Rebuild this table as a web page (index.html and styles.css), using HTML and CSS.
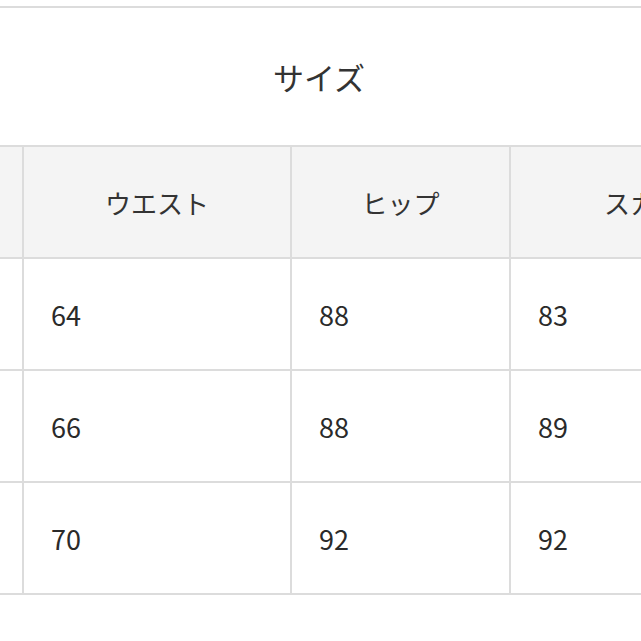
FILE: index.html
```html
<!DOCTYPE html>
<html lang="ja">
<head>
<meta charset="utf-8">
<title>サイズ</title>
<link rel="stylesheet" href="styles.css">
</head>
<body>
<div class="frame">
  <table class="size-table">
    <colgroup>
      <col class="c0">
      <col class="c1">
      <col class="c2">
      <col class="c3">
    </colgroup>
    <thead>
      <tr class="title-row"><th colspan="4">サイズ</th></tr>
      <tr class="head-row">
        <th>サイズ</th>
        <th>ウエスト</th>
        <th>ヒップ</th>
        <th>スカート丈</th>
      </tr>
    </thead>
    <tbody>
      <tr><td>S</td><td>64</td><td>88</td><td>83</td></tr>
      <tr><td>M</td><td>66</td><td>88</td><td>89</td></tr>
      <tr><td>L</td><td>70</td><td>92</td><td>92</td></tr>
    </tbody>
  </table>
</div>
</body>
</html>
```
FILE: styles.css
```css
html, body {
  margin: 0;
  padding: 0;
  background: #ffffff;
}
body {
  font-family: "Noto Sans CJK JP", "Noto Sans", sans-serif;
  color: #333333;
}
.frame {
  width: 641px;
  height: 641px;
  overflow: hidden;
  padding-top: 6px;
  box-sizing: border-box;
}
.size-table {
  margin-left: -191px;
  table-layout: fixed;
  width: 1020px;
  border-collapse: separate;
  border-spacing: 0;
  border-top: 2px solid #dcdcdc;
}
.c0 { width: 215px; }
.c1 { width: 268px; }
.c2 { width: 219px; }
.c3 { width: 318px; }
.size-table th,
.size-table td {
  box-sizing: border-box;
  padding: 0;
  border-right: 2px solid #dcdcdc;
  border-bottom: 2px solid #dcdcdc;
  font-weight: 400;
  white-space: nowrap;
  overflow: hidden;
  vertical-align: middle;
}
.title-row th {
  height: 139px;
  font-size: 31px;
  text-align: center;
  background: #ffffff;
  border-right: none;
}
.head-row th {
  height: 112px;
  font-size: 26px;
  text-align: center;
  background: #f4f4f4;
}
.size-table td {
  height: 112px;
  font-size: 27px;
  text-align: left;
  padding-left: 27px;
  color: #2a2a2a;
}
```
